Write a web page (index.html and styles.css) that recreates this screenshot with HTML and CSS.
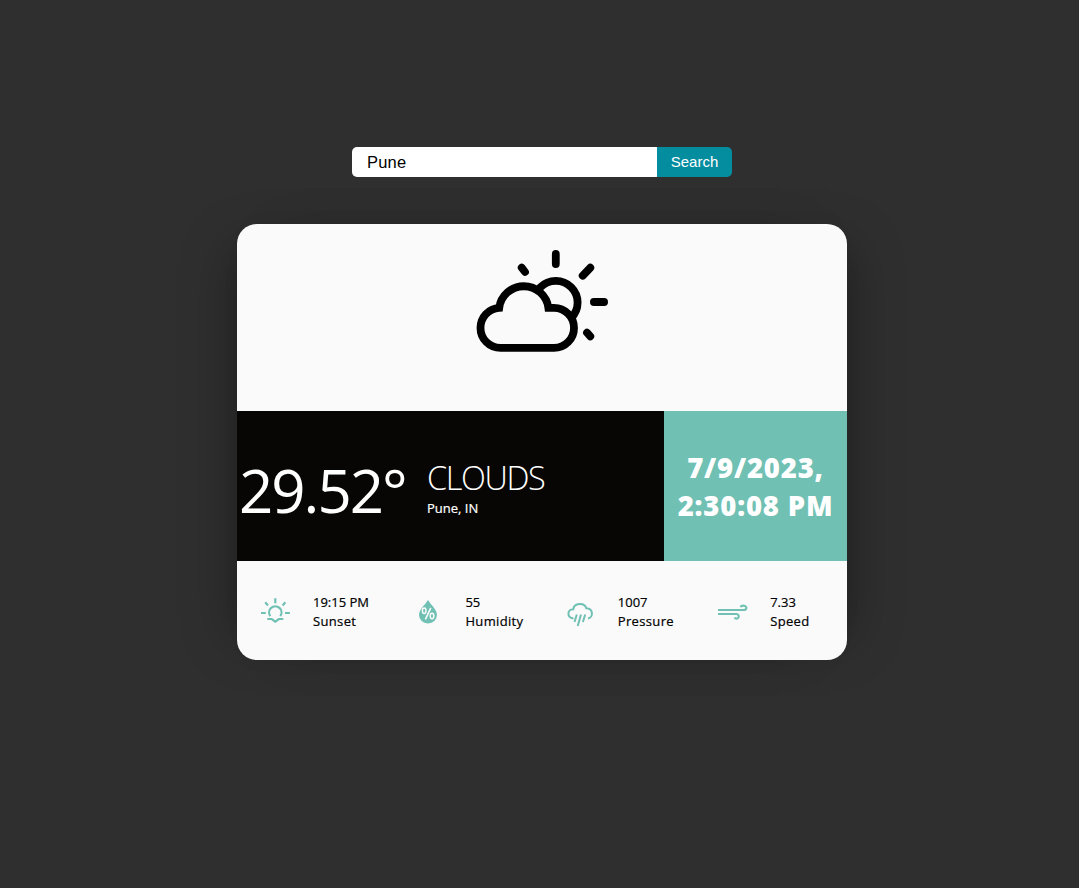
FILE: index.html
```html
<!DOCTYPE html>
<html lang="en">
<head>
<meta charset="utf-8">
<title>Weather</title>
<link rel="stylesheet" href="styles.css">
</head>
<body>
<main class="page">
  <form class="search">
    <input class="search-input" type="text" value="Pune" aria-label="City">
    <button class="search-button" type="button">Search</button>
  </form>
  <article class="card">
    <div class="hero">
      <svg class="hero-icon" viewBox="465 240 155 120" fill="none" stroke="#000" stroke-width="7.8">
        <circle cx="555.8" cy="302.6" r="21.8"/>
        <path fill="#fafafa" d="M500.5 347.9A20 20 0 0 1 480.5 327.9A20 20 0 0 1 499.2 307.9A24.8 24.8 0 0 1 548.4 307.9H554A20 20 0 0 1 574 327.9A20 20 0 0 1 554 347.9Z"/>
        <path stroke-linecap="round" d="M555.8 253.9V264.1M593.9 302H604.1M582.7 275.7L590.3 267.7M521.7 267.7L525 272M587 332.7L590.3 336.3"/>
      </svg>
    </div>
    <div class="summary">
      <div class="weather">
        <div class="temperature">29.52°</div>
        <div class="description">
          <div class="condition">CLOUDS</div>
          <div class="place">Pune, IN</div>
        </div>
      </div>
      <div class="date"><span class="day">7/9/2023,</span><span class="time">2:30:08 PM</span></div>
    </div>
    <div class="details">
      <div class="detail">
        <svg class="icon" viewBox="0 0 40 40" fill="none" stroke="#71c0b4" stroke-width="2.2">
          <path d="M14.3 24.2A6.2 6.2 0 1 1 24.3 24.2M11.3 27H15.7L19.3 29.6L22.9 27H27.3M19.3 6.3V11.3M9.2 10.3L12 13.4M29.4 10.3L26.6 13.4M5 21H9.8M29 21H33.9"/>
        </svg>
        <div class="reading"><span>19:15 PM</span><span class="label">Sunset</span></div>
      </div>
      <div class="detail">
        <svg class="icon" viewBox="0 0 40 40" fill="none">
          <path fill="#71c0b4" d="M20 8C17 13 11 17.5 11 23A9 8.5 0 0 0 29 23C29 17.5 23 13 20 8Z"/>
          <path stroke="#fafafa" stroke-width="1.6" d="M22.8 15.8L17.4 27.4"/>
          <ellipse cx="16.2" cy="18.8" rx="1.8" ry="2.7" stroke="#fafafa" stroke-width="1.5"/>
          <ellipse cx="24" cy="24" rx="1.8" ry="2.7" stroke="#fafafa" stroke-width="1.5"/>
        </svg>
        <div class="reading"><span>55</span><span class="label">Humidity</span></div>
      </div>
      <div class="detail">
        <svg class="icon" viewBox="1 0 40 40" fill="none" stroke="#71c0b4" stroke-width="2">
          <path d="M13.5 26.5C6.5 25.5 7 17.3 13.3 17.3C14 10.7 24.5 10.3 26.3 16.3C33.5 16.5 33.5 25.5 28 26.5M16.8 22.5L14.5 30M21 22.5L17.7 34M25.2 22.5L22.9 30"/>
        </svg>
        <div class="reading"><span>1007</span><span class="label">Pressure</span></div>
      </div>
      <div class="detail">
        <svg class="icon" viewBox="1 0 40 40" fill="none" stroke="#71c0b4" stroke-width="2.1">
          <path d="M6 18H31A3 2.2 0 1 0 28.5 15.2M6 22H24.5A2.3 2.3 0 1 1 22.5 25.5"/>
        </svg>
        <div class="reading"><span>7.33</span><span class="label">Speed</span></div>
      </div>
    </div>
  </article>
</main>
</body>
</html>
```
FILE: styles.css
```css
* { box-sizing: border-box; }
body {
  margin: 0;
  min-height: 888px;
  background: #2f2f2f;
  color: #000;
  font-family: "Open Sans", "Noto Sans", sans-serif;
}
.page {
  display: flex;
  flex-direction: column;
  align-items: center;
  padding: 147px 0 0 5px;
}
.search { display: flex; width: 380px; height: 30px; }
.search-input {
  width: 305px;
  padding: 0 15px;
  border: 0;
  border-radius: 5px 0 0 5px;
  background: #fff;
  color: #000;
  font: 16.5px "Liberation Sans", sans-serif;
  letter-spacing: 0.2px;
}
.search-button {
  width: 75px;
  padding: 0 0 2px;
  border: 0;
  border-radius: 0 5px 5px 0;
  background: #048c9f;
  color: #fff;
  font: 15px "Liberation Sans", sans-serif;
}
.card {
  width: 610px;
  height: 436px;
  margin-top: 47px;
  overflow: hidden;
  border-radius: 20px;
  background: #fafafa;
  box-shadow:
    25px 0 50px -25px rgba(0, 0, 0, 0.35),
    -25px 0 50px -25px rgba(0, 0, 0, 0.35);
}
.hero { display: flex; justify-content: center; height: 187px; padding-top: 16px; }
.hero-icon { width: 155px; height: 120px; }
.summary { display: flex; height: 150px; color: #fff; }
.weather { display: flex; width: 427px; background: #070604; }
.temperature {
  width: 190px;
  padding: 35px 0 0 2px;
  font-size: 60px;
  line-height: 88px;
  letter-spacing: -2px;
  white-space: nowrap;
}
.condition {
  padding-top: 44px;
  font-size: 32.5px;
  font-weight: 300;
  line-height: 46px;
  letter-spacing: -1.4px;
}
.place {
  margin-top: -1px;
  font-size: 13px;
  font-weight: 500;
  line-height: 16px;
  -webkit-text-stroke: 0.2px #fff;
}
.date {
  display: flex;
  flex-direction: column;
  align-items: center;
  width: 183px;
  padding-top: 38px;
  background: #71c0b4;
  font-size: 27.5px;
  font-weight: 800;
  line-height: 38px;
  letter-spacing: 0.8px;
  white-space: nowrap;
}
.details { display: grid; grid-template-columns: repeat(4, 152.4px); height: 99px; }
.detail { display: flex; gap: 17px; padding: 31px 0 0 19px; }
.icon { width: 40px; height: 40px; flex: none; }
.reading {
  display: flex;
  flex-direction: column;
  padding-top: 1px;
  font-size: 13px;
  font-weight: 500;
  line-height: 19px;
  -webkit-text-stroke: 0.2px #000;
}
.label { letter-spacing: 0.35px; }
```
